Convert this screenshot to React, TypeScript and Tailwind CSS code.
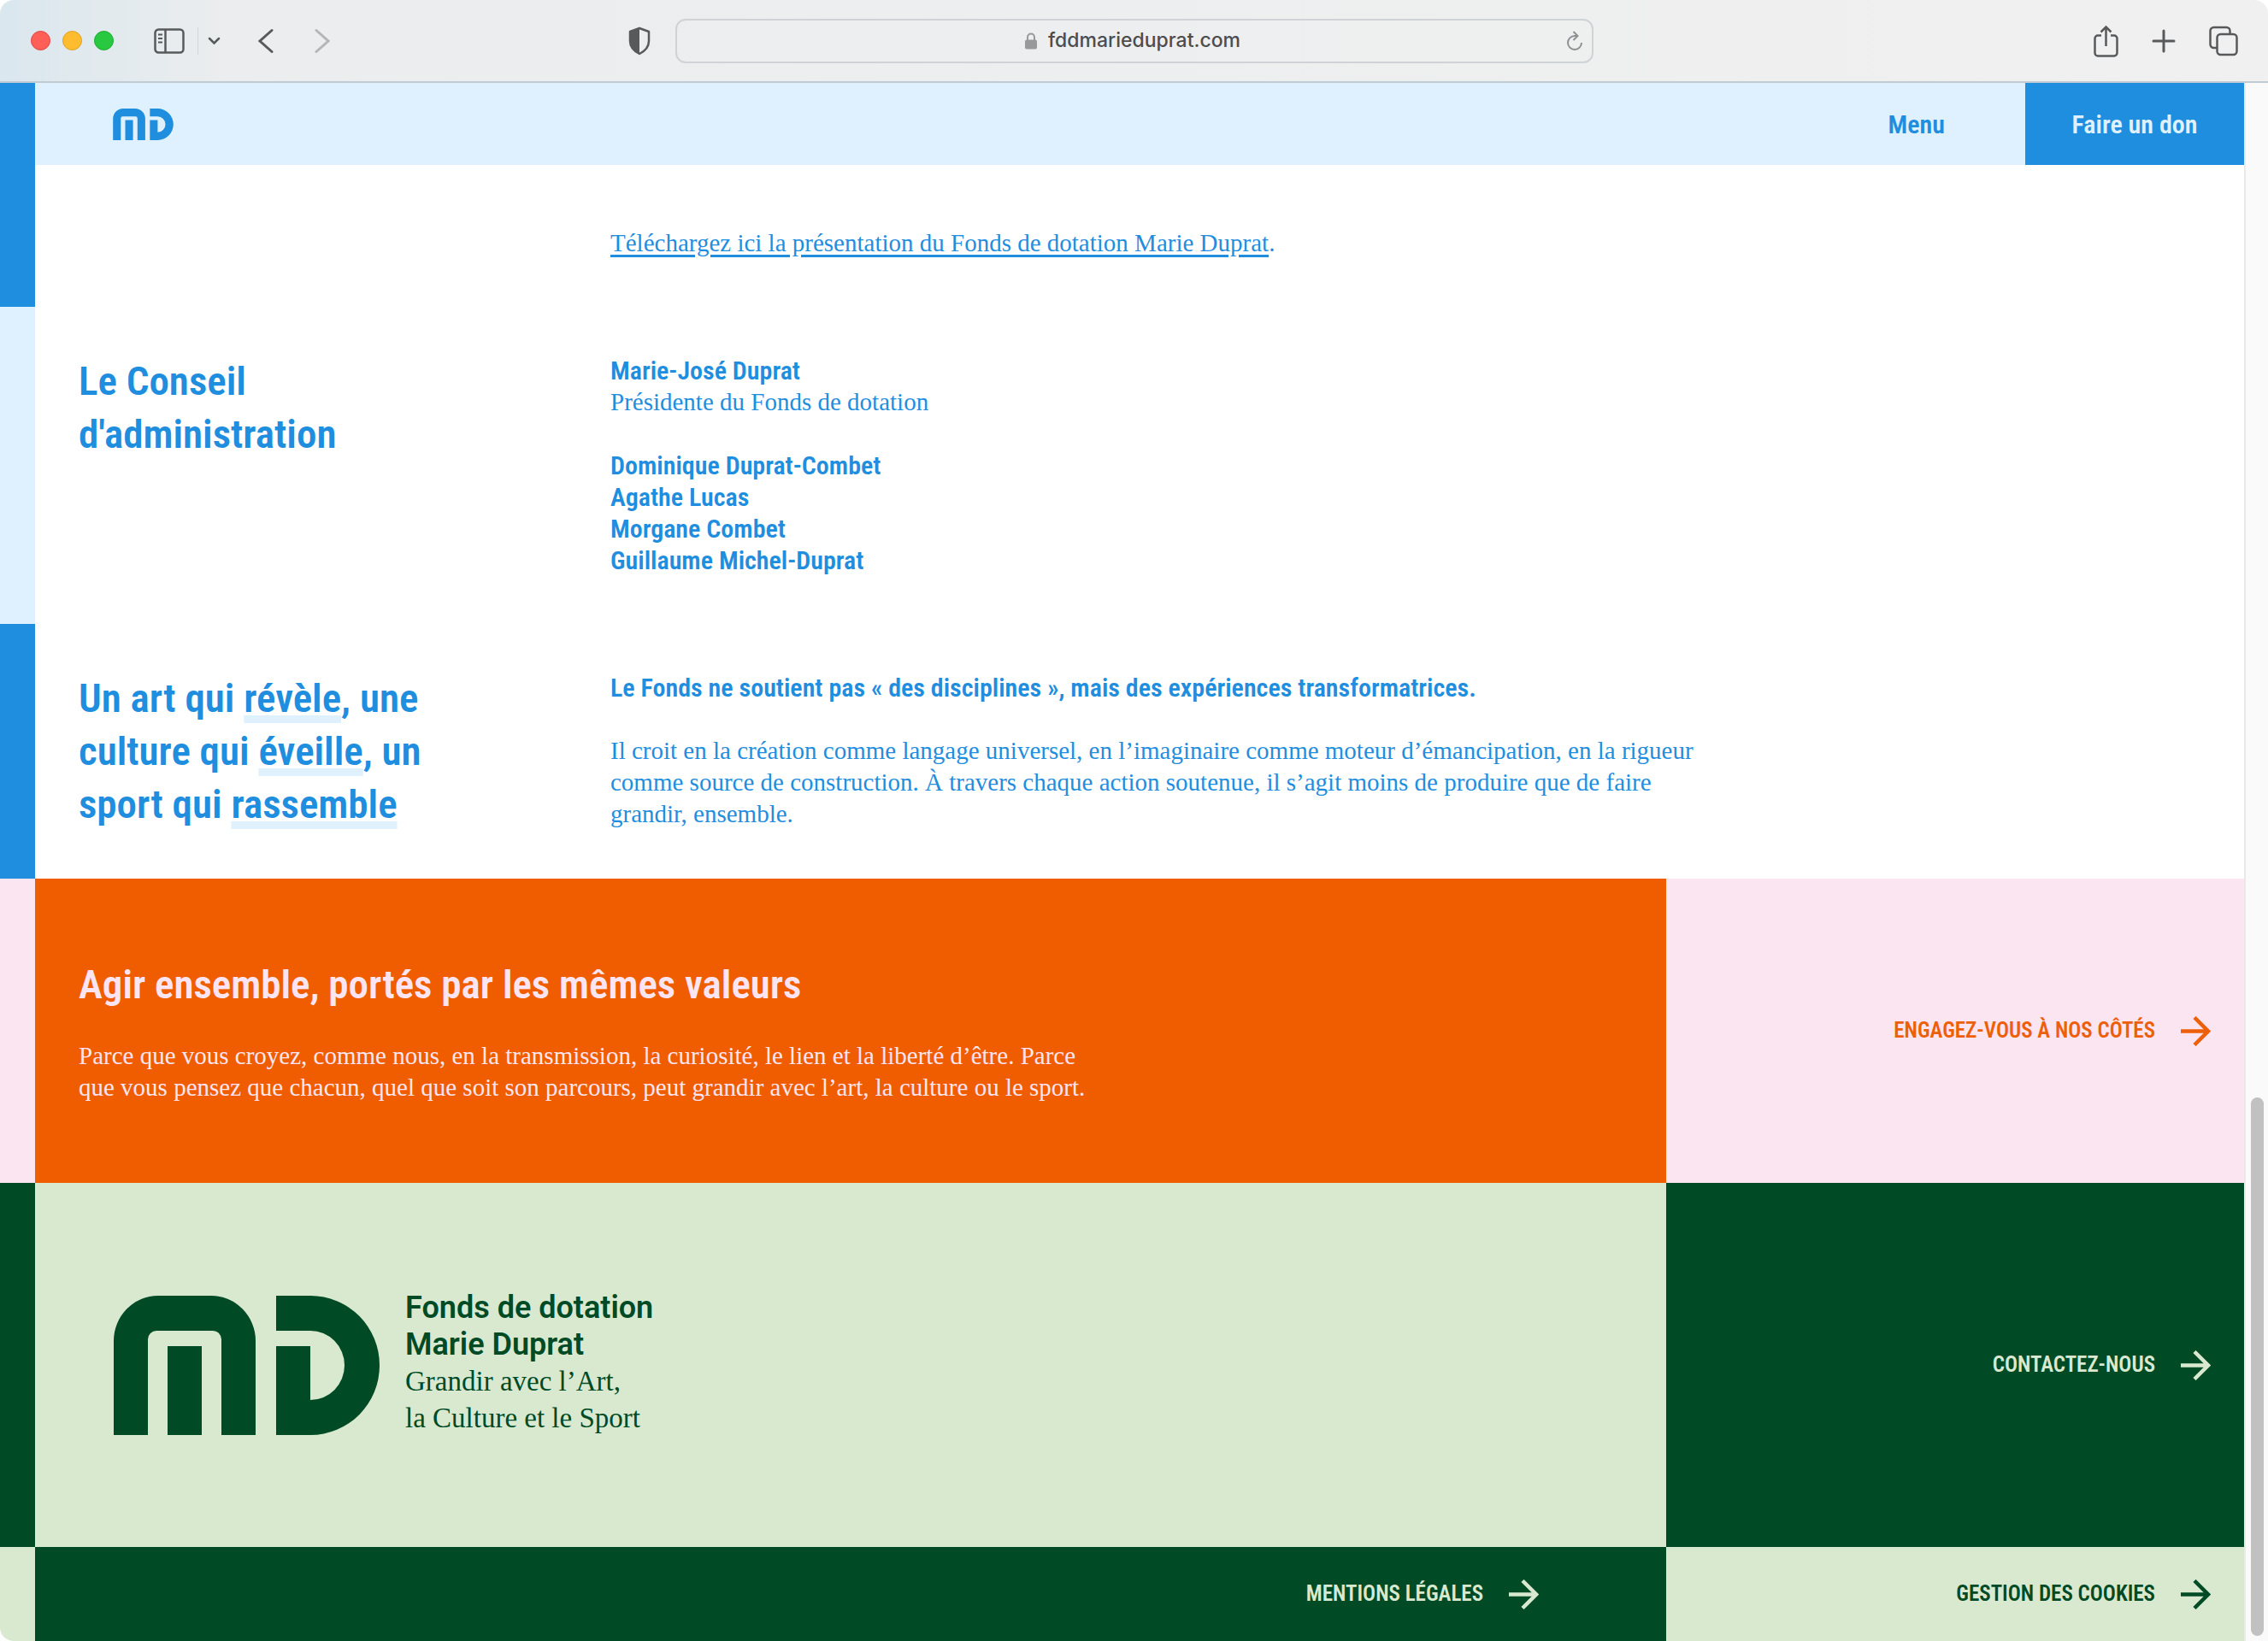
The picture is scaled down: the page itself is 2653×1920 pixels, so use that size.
import React from "react";

interface MarkProps {
  className: string;
}

interface ArrowLinkProps {
  label: string;
  className?: string;
}

const board = ["Dominique Duprat-Combet", "Agathe Lucas", "Morgane Combet", "Guillaume Michel-Duprat"];

const Mark: React.FC<MarkProps> = ({ className }) => (
  <svg viewBox="0 0 311 163" className={className} fill="currentColor" aria-hidden="true">
    <path d="M0 163V53A52 53 0 0 1 52 0H114A52 53 0 0 1 166 53V163H126V51A10 10 0 0 0 116 41H50A10 10 0 0 0 40 51V163Z" />
    <path d="M63 59H103V163H63Z" />
    <path d="M190 0H230A81 81.500 0 0 1 230 163H190V59H230V122A40 40.500 0 0 0 230 41H190Z" />
  </svg>
);

const ArrowLink: React.FC<ArrowLinkProps> = ({ label, className = "" }) => (
  <a
    href="#"
    className={`flex items-center gap-[30px] font-['Roboto_Condensed','Liberation_Sans',sans-serif] text-[25px] font-semibold leading-9 uppercase whitespace-nowrap ${className}`}
  >
    {label}
    <svg viewBox="0 0 35 35" className="size-[35px] shrink-0" fill="none" stroke="currentColor" strokeWidth="4.500" aria-hidden="true">
      <path d="M0 17.500H32M16 1.500L32 17.500L16 33.500" />
    </svg>
  </a>
);

const Highlight: React.FC<{ children: React.ReactNode }> = ({ children }) => (
  <span className="underline decoration-[#dff1fe] decoration-[9px] underline-offset-[4px] [text-decoration-skip-ink:none]">{children}</span>
);

const Toolbar: React.FC = () => (
  <div className="flex h-[97px] items-center rounded-t-2xl border-b-2 border-[#c0cbd4] bg-linear-to-r from-[#dae7ee] via-[#ebedee] via-10% to-[#f0f0f0] text-[#58595b]">
    <div className="flex flex-1 items-center pl-9">
      <div className="flex gap-[14px]">
        <button aria-label="Fermer" className="size-[23px] rounded-full border border-[#e0443e] bg-[#ff5f57]" />
        <button aria-label="Réduire" className="size-[23px] rounded-full border border-[#dfa023] bg-[#febc2e]" />
        <button aria-label="Agrandir" className="size-[23px] rounded-full border border-[#1eab2f] bg-[#28c840]" />
      </div>
      <button aria-label="Barre latérale" className="ml-[47px]">
        <svg viewBox="0 0 36 30" className="h-[30px] w-9" fill="none" stroke="currentColor" strokeWidth="2.500">
          <rect x="1.500" y="1.500" width="33" height="27" rx="4" />
          <path d="M13.500 1.500V28.500" />
          <path d="M5 7.500H10M5 12H10M5 16.500H10" strokeWidth="2" />
        </svg>
      </button>
      <div className="ml-[15px] h-8 w-px bg-[#d3d6d8]" />
      <button aria-label="Groupes d'onglets" className="ml-[11px]">
        <svg viewBox="0 0 15 10" className="h-[10px] w-[15px]" fill="none" stroke="currentColor" strokeWidth="2.500" strokeLinecap="round">
          <path d="M2 2L7.500 7.500L13 2" />
        </svg>
      </button>
      <button aria-label="Précédent" className="ml-[44px]">
        <svg viewBox="0 0 18 30" className="h-[30px] w-[18px]" fill="none" stroke="currentColor" strokeWidth="3" strokeLinecap="round">
          <path d="M16 2.500L2 15L16 27.500" />
        </svg>
      </button>
      <button aria-label="Suivant" className="ml-12 text-[#b3b5b6]">
        <svg viewBox="0 0 18 30" className="h-[30px] w-[18px]" fill="none" stroke="currentColor" strokeWidth="3" strokeLinecap="round">
          <path d="M2 2.500L16 15L2 27.500" />
        </svg>
      </button>
      <button aria-label="Rapport de confidentialité" className="mr-7 ml-auto">
        <svg viewBox="0 0 28 34" className="h-[34px] w-7">
          <path d="M14 2L25 6V17C25 24 20 29 14 32C8 29 3 24 3 17V6Z" fill="none" stroke="currentColor" strokeWidth="2.500" strokeLinejoin="round" />
          <path d="M14 2L3 6V17C3 24 8 29 14 32Z" fill="currentColor" />
        </svg>
      </button>
    </div>
    <div className="flex h-[52px] w-[40.500%] items-center rounded-xl border-2 border-[#cfd3d6] px-[10px]">
      <div className="w-5" />
      <div className="flex flex-1 items-center justify-center gap-3">
        <svg viewBox="0 0 16 20" className="h-5 w-4 text-[#98999b]" aria-hidden="true">
          <path d="M4 9V5.500A4 4 0 0 1 12 5.500V9" fill="none" stroke="currentColor" strokeWidth="2" />
          <rect x="1" y="8.500" width="14" height="11" rx="2" fill="currentColor" />
        </svg>
        <input
          type="text"
          aria-label="Adresse"
          defaultValue="fddmarieduprat.com"
          className="w-[230px] bg-transparent font-['Inter','Liberation_Sans',sans-serif] text-[23px] font-medium text-[#4c4d4f] outline-none"
        />
      </div>
      <button aria-label="Actualiser" className="text-[#8d8f91]">
        <svg viewBox="0 0 20 24" className="h-6 w-5" fill="none" stroke="currentColor" strokeWidth="2">
          <path d="M12.500 6H10A8 8 0 1 0 18 14" />
          <path d="M8.500 1L13.500 6L8.500 11" />
        </svg>
      </button>
    </div>
    <div className="flex flex-1 items-center justify-end pr-[35px]">
      <button aria-label="Partager">
        <svg viewBox="0 0 29 38" className="h-[38px] w-[29px]" fill="none" stroke="currentColor" strokeWidth="2.500">
          <path d="M9 12.500H5A3.500 3.500 0 0 0 1.500 16V33A3.500 3.500 0 0 0 5 36.500H24A3.500 3.500 0 0 0 27.500 33V16A3.500 3.500 0 0 0 24 12.500H20" />
          <path d="M14.500 25V3M8.500 8.500L14.500 2.500L20.500 8.500" />
        </svg>
      </button>
      <button aria-label="Nouvel onglet" className="ml-[39px]">
        <svg viewBox="0 0 28 28" className="size-7" fill="none" stroke="currentColor" strokeWidth="3" strokeLinecap="round">
          <path d="M14 2V26M2 14H26" />
        </svg>
      </button>
      <button aria-label="Afficher les onglets" className="ml-[39px]">
        <svg viewBox="0 0 34 36" className="h-9 w-[34px]" fill="none" stroke="currentColor" strokeWidth="2.500">
          <rect x="9.500" y="10" width="23" height="24" rx="4" />
          <path d="M9.500 26H5.500A4 4 0 0 1 1.500 22V6A4 4 0 0 1 5.500 2H20.500A4 4 0 0 1 24.500 6V10" />
        </svg>
      </button>
    </div>
  </div>
);

const App: React.FC = () => {
  return (
    <div className="flex min-h-screen flex-col bg-white font-['Liberation_Serif',serif] text-[29px] leading-[37px] text-[#1f8ede]">
      <Toolbar />
      <div className="flex flex-1">
        <div className="flex flex-1 flex-col overflow-hidden rounded-bl-2xl">
          <header className="flex h-24 font-['Roboto_Condensed','Liberation_Sans',sans-serif] text-[30px] font-semibold">
            <div className="w-[41px] bg-[#1f8ede]" />
            <div className="flex flex-1 items-center justify-between bg-[#dff1fe] pr-[94px] pl-[91px]">
              <a href="#" aria-label="Marie Duprat">
                <Mark className="h-[37px] w-[71px]" />
              </a>
              <button className="cursor-pointer">Menu</button>
            </div>
            <a href="#" className="flex w-64 items-center justify-center bg-[#1f8ede] text-[#dff1fe]">
              Faire un don
            </a>
          </header>

          <main>
            <section className="flex">
              <div className="w-[41px] bg-[#1f8ede]" />
              <div className="flex-1 pt-[73px] pb-14 pl-[673px]">
                <p>
                  <a href="#" className="underline decoration-[3px] underline-offset-[4px]">
                    Téléchargez ici la présentation du Fonds de dotation Marie Duprat
                  </a>
                  .
                </p>
              </div>
            </section>

            <section className="flex">
              <div className="w-[41px] bg-[#dff1fe]" />
              <div className="flex flex-1 py-14 pl-[51px]">
                <h2 className="w-[622px] font-['Roboto_Condensed','Liberation_Sans',sans-serif] text-[47px] leading-[62px] font-semibold">
                  Le Conseil
                  <br />
                  d'administration
                </h2>
                <div>
                  <p className="font-['Roboto_Condensed','Liberation_Sans',sans-serif] text-[30px] font-semibold">Marie-José Duprat</p>
                  <p>Présidente du Fonds de dotation</p>
                  <ul className="mt-[37px] font-['Roboto_Condensed','Liberation_Sans',sans-serif] text-[30px] font-semibold">
                    {board.map((name) => (
                      <li key={name}>{name}</li>
                    ))}
                  </ul>
                </div>
              </div>
            </section>

            <section className="flex">
              <div className="w-[41px] bg-[#1f8ede]" />
              <div className="flex flex-1 py-14 pl-[51px]">
                <h2 className="w-[622px] font-['Roboto_Condensed','Liberation_Sans',sans-serif] text-[47px] leading-[62px] font-semibold">
                  Un art qui <Highlight>révèle</Highlight>, une
                  <br />
                  culture qui <Highlight>éveille</Highlight>, un
                  <br />
                  sport qui <Highlight>rassemble</Highlight>
                </h2>
                <div className="max-w-[1290px] flex-1">
                  <p className="font-['Roboto_Condensed','Liberation_Sans',sans-serif] text-[30px] font-semibold">
                    Le Fonds ne soutient pas « des disciplines », mais des expériences transformatrices.
                  </p>
                  <p className="mt-[37px]">
                    Il croit en la création comme langage universel, en l’imaginaire comme moteur d’émancipation, en la rigueur comme source de construction. À travers chaque action soutenue, il s’agit moins de produire que de faire grandir, ensemble.
                  </p>
                </div>
              </div>
            </section>

            <section className="flex">
              <div className="w-[41px] bg-[#fae5f1]" />
              <div className="flex-1 bg-[#f05d00] py-[93px] pl-[51px] text-[#fbe5f2]">
                <h2 className="font-['Roboto_Condensed','Liberation_Sans',sans-serif] text-[47px] leading-[62px] font-semibold">
                  Agir ensemble, portés par les mêmes valeurs
                </h2>
                <p className="mt-[34px] max-w-[1190px]">
                  Parce que vous croyez, comme nous, en la transmission, la curiosité, le lien et la liberté d’être. Parce que vous pensez que chacun, quel que soit son parcours, peut grandir avec l’art, la culture ou le sport.
                </p>
              </div>
              <div className="flex w-[676px] items-center justify-end bg-[#fae5f1] pr-[39px] text-[#ee5f0a]">
                <ArrowLink label="Engagez-vous à nos côtés" />
              </div>
            </section>
          </main>

          <footer className="flex flex-1 flex-col text-[#004b25]">
            <div className="flex">
              <div className="w-[41px] bg-[#004b25]" />
              <div className="flex flex-1 items-center gap-[30px] bg-[#d8e9d0] py-[125px] pl-[92px]">
                <Mark className="h-[163px] w-[311px]" />
                <div className="pb-1 text-[33px] leading-[43px]">
                  <p className="font-['Roboto','Liberation_Sans',sans-serif] text-[36px] leading-[43px] font-semibold">
                    Fonds de dotation
                    <br />
                    Marie Duprat
                  </p>
                  <p>
                    Grandir avec l’Art,
                    <br />
                    la Culture et le Sport
                  </p>
                </div>
              </div>
              <div className="flex w-[676px] items-center justify-end bg-[#004b25] pr-[39px] text-[#d8e9d0]">
                <ArrowLink label="Contactez-nous" />
              </div>
            </div>
            <div className="flex flex-1">
              <div className="w-[41px] bg-[#d8e9d0]" />
              <div className="flex flex-1 items-center justify-end bg-[#004b25] py-9 pr-[149px] text-[#d8e9d0]">
                <ArrowLink label="Mentions légales" />
              </div>
              <div className="flex w-[676px] items-center justify-end bg-[#d8e9d0] pr-[39px]">
                <ArrowLink label="Gestion des cookies" />
              </div>
            </div>
          </footer>
        </div>

        <div className="flex w-7 flex-col items-center justify-end border-l-2 border-[#e9e9e9] bg-[#fafafa] pb-[6px]">
          <div className="h-[630px] w-[15px] rounded-full bg-[#c1c1c1]" />
        </div>
      </div>
    </div>
  );
};

export default App;
